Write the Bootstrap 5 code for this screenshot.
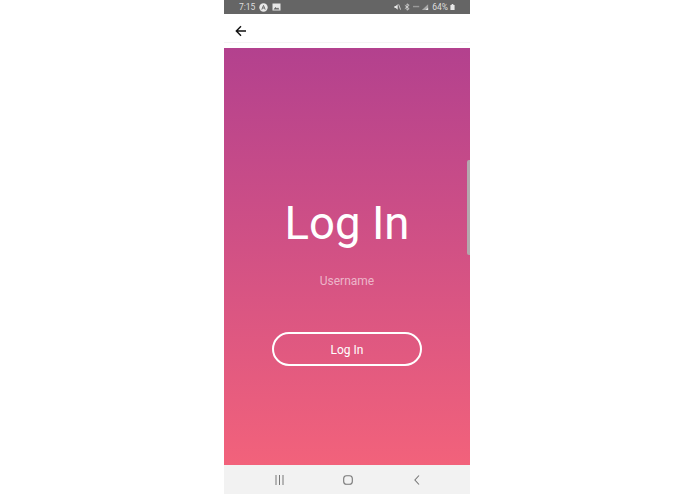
<!DOCTYPE html>
<html lang="en">
<head>
<meta charset="utf-8">
<title>Log In</title>
<link href="https://cdn.jsdelivr.net/npm/bootstrap@5.3.0/dist/css/bootstrap.min.css" rel="stylesheet">
<style>
html,body{height:100%;background:#fff;overflow:hidden}
body{font-family:Roboto,"Liberation Sans",sans-serif}
.phone-shell{width:246px;height:494px;margin-left:224px}
.status-strip{height:14px;background:#656565;color:#dedede;font-size:8.5px;line-height:14px;padding:0 15px 0 15px}
.status-right{gap:3px}
.status-battery{margin-left:-1px}
.top-strip{height:34px;background:#fff}
.top-bar{height:29px;padding:5px 0 0 11px;border-bottom:1px solid #f4f4f4}
.login-panel{height:417px;background:linear-gradient(180deg,#b3418e 0%,#f2627b 100%);position:relative;color:#fff}
.login-title{font-size:45.5px;font-weight:400;line-height:56px;margin:0;padding-top:148px}
.login-hint{font-size:12px;line-height:16px;color:rgba(255,255,255,.58);margin-top:21px}
.login-btn{width:150px;height:34px;border:2px solid #fff;border-radius:17px;color:#fff;font-size:12px;line-height:1;padding:2px 0 0;margin-top:43px;background:transparent}
.login-btn:hover{color:#fff;border-color:#fff}
.scroll-thumb{position:absolute;right:0;top:112px;width:3px;height:95px;background:#b3a9ae;border-radius:2px 0 0 2px}
.nav-strip{height:29px;background:#f2f2f2;padding-left:51px}
.nav-home{margin:0 61px 0 59px}
</style>
</head>
<body>
<div class="phone-shell d-flex flex-column">
  <div class="status-strip d-flex align-items-center justify-content-between">
    <div class="d-flex align-items-center gap-1">
      <span>7:15</span>
      <svg width="9" height="9" viewBox="0 0 9 9"><circle cx="4.5" cy="4.5" r="4.2" fill="#e8e8e8"/><path d="M2.8 6.6 4.5 2.4l1.7 4.2M3.5 5h2" fill="none" stroke="#656565" stroke-width=".9"/></svg>
      <svg width="9" height="8" viewBox="0 0 9 8"><path d="M.5.5h8v7h-8z" fill="#e8e8e8"/><path d="m1.5 6.500 2-2.500 1.500 1.500 1-1 1.500 2z" fill="#656565"/></svg>
    </div>
    <div class="status-right d-flex align-items-center">
      <svg width="7" height="8" viewBox="0 0 8 8"><path d="M.5 2.800h1.500L4.200.8v6.400L2 5.200H.5z" fill="#e8e8e8"/><path d="M5.300 1 7.500 7" stroke="#e8e8e8" stroke-width=".9"/></svg>
      <svg width="6" height="8" viewBox="0 0 7 8"><path d="m1 2 5 4-2.500 1.700V.3L6 2 1 6" fill="none" stroke="#e0e0e0" stroke-width=".9"/></svg>
      <svg width="16" height="8" viewBox="0 0 18 8"><path d="M0 3.500h7" stroke="#9a9a9a" stroke-width="1.600"/><path d="M10 7.500 17 1v6.500z" fill="#a8a8a8"/><path d="M14 7.500 17 4.800v2.700z" fill="#e8e8e8"/></svg>
      <span>64%</span>
      <svg class="status-battery" width="5" height="8" viewBox="0 0 6 8"><path d="M2 .5h2V1.500h1.500v6H.5v-6H2z" fill="#e8e8e8"/></svg>
    </div>
  </div>
  <div class="top-strip">
    <div class="top-bar d-flex align-items-center">
      <svg width="12" height="12" viewBox="0 0 12 12" aria-label="Back"><path d="M11 6H1.500M6 1.200 1.300 6 6 10.800" fill="none" stroke="#111" stroke-width="1.400"/></svg>
    </div>
  </div>
  <main class="login-panel text-center">
    <h1 class="login-title">Log In</h1>
    <div class="login-hint">Username</div>
    <button type="button" class="btn login-btn">Log In</button>
    <div class="scroll-thumb"></div>
  </main>
  <div class="nav-strip d-flex align-items-center">
    <svg width="9" height="10" viewBox="0 0 9 10"><path d="M1 0v10M4.500 0v10M8 0v10" stroke="#777" stroke-width="1"/></svg>
    <svg class="nav-home" width="10" height="10" viewBox="0 0 10 10"><rect x=".7" y=".7" width="8.600" height="8.600" rx="2.800" fill="none" stroke="#777" stroke-width="1.100"/></svg>
    <svg width="6" height="10" viewBox="0 0 6 10"><path d="M5 .5.900 5 5 9.500" fill="none" stroke="#777" stroke-width="1.100"/></svg>
  </div>
</div>
<script src="https://cdn.jsdelivr.net/npm/bootstrap@5.3.0/dist/js/bootstrap.bundle.min.js"></script>
</body>
</html>
